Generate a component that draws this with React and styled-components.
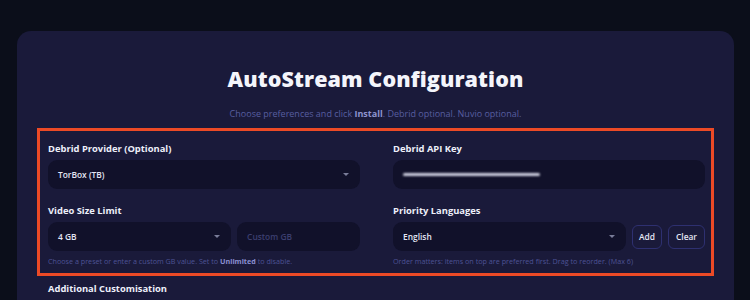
import styled, { createGlobalStyle } from 'styled-components';

const GlobalStyle = createGlobalStyle`
    html, body {
        margin: 0;
        padding: 0;
        background: #0b0e1a;
        font-family: 'Open Sans', 'Liberation Sans', sans-serif;
    }
`;

const StPage = styled.div`
    width: 750px;
    height: 300px;
    overflow: hidden;
    box-sizing: border-box;
    padding: 31px 16px 0 17px;
    background: #0b0e1a;
`;

const StCard = styled.div`
    background: #1a1a3a;
    border-radius: 14px;
    padding: 34px 20px 20px;
    min-height: 400px;
    box-sizing: border-box;
`;

const StTitle = styled.h1`
    margin: 0;
    text-align: center;
    color: #f4f5fb;
    font-size: 21.5px;
    font-weight: 800;
    line-height: 28px;
    letter-spacing: 0.1px;
`;

const StSubtitle = styled.p`
    margin: 15px 0 8px;
    text-align: center;
    color: #585ea0;
    font-size: 9px;
    line-height: 12px;

    b {
        color: #8e93cf;
        font-weight: 700;
    }
`;

const StSection = styled.div`
    border: 3px solid #ec4a26;
    padding: 11px 6px 6px 8px;
    display: grid;
    grid-template-columns: 312px 312px;
    column-gap: 33px;
`;

const StColumn = styled.div`
    display: flex;
    flex-direction: column;
`;

const StLabel = styled.div`
    color: #eef0fa;
    font-size: 9.4px;
    font-weight: 700;
    line-height: 14px;
    margin: ${(props) => (props.$second ? '15px' : '0')} 0 4px;
`;

const StRow = styled.div`
    display: flex;
    align-items: center;
    gap: 6px;
`;

const StField = styled.div`
    flex: ${(props) => props.$flex || '0 0 auto'};
    height: 29px;
    background: #11112a;
    border-radius: 9px;
    display: flex;
    align-items: center;
    justify-content: space-between;
    padding: 0 10px;
    box-sizing: border-box;
    color: ${(props) => (props.$placeholder ? '#3c3f70' : '#e4e6f4')};
    font-size: 8.4px;
    font-weight: 600;
`;

const StChevron = styled.span`
    width: 0;
    height: 0;
    border-left: 3px solid transparent;
    border-right: 3px solid transparent;
    border-top: 3px solid #7a7d99;
    margin-right: 1px;
`;

const StBlurred = styled.span`
    display: block;
    width: 137px;
    height: 3px;
    background: #cfd0e0;
    border-radius: 2px;
    filter: blur(1px);
`;

const StBtn = styled.button`
    height: 24px;
    padding: 0 ${(props) => (props.$wide ? '7px' : '6px')};
    border: 1px solid #2e3070;
    border-radius: 6px;
    background: #1a1a3a;
    color: #e4e6f4;
    font-family: inherit;
    font-size: 8.4px;
    font-weight: 600;
    cursor: pointer;
`;

const StHelp = styled.div`
    margin-top: 4px;
    color: #4d5294;
    font-size: 7.2px;
    line-height: 12px;

    b {
        color: #8b90d2;
        font-weight: 700;
    }
`;

const StSubheading = styled.div`
    margin: 6px 0 0 11px;
    color: #eef0fa;
    font-size: 9.4px;
    font-weight: 700;
    line-height: 14px;
`;

const App = () => {
    return (
        <StPage>
            <GlobalStyle />
            <StCard>
                <StTitle>AutoStream Configuration</StTitle>
                <StSubtitle>
                    Choose preferences and click <b>Install</b>. Debrid optional. Nuvio optional.
                </StSubtitle>

                <StSection>
                    <StColumn>
                        <StLabel>Debrid Provider (Optional)</StLabel>
                        <StField>
                            TorBox (TB)
                            <StChevron />
                        </StField>

                        <StLabel $second>Video Size Limit</StLabel>
                        <StRow>
                            <StField $flex={187}>
                                4 GB
                                <StChevron />
                            </StField>
                            <StField $flex={118} $placeholder>Custom GB</StField>
                        </StRow>
                        <StHelp>
                            Choose a preset or enter a custom GB value. Set to <b>Unlimited</b> to disable.
                        </StHelp>
                    </StColumn>

                    <StColumn>
                        <StLabel>Debrid API Key</StLabel>
                        <StField>
                            <StBlurred />
                        </StField>

                        <StLabel $second>Priority Languages</StLabel>
                        <StRow>
                            <StField $flex={1}>
                                English
                                <StChevron />
                            </StField>
                            <StBtn>Add</StBtn>
                            <StBtn $wide>Clear</StBtn>
                        </StRow>
                        <StHelp>Order matters: items on top are preferred first. Drag to reorder. (Max 6)</StHelp>
                    </StColumn>
                </StSection>

                <StSubheading>Additional Customisation</StSubheading>
            </StCard>
        </StPage>
    );
};

export default App;
